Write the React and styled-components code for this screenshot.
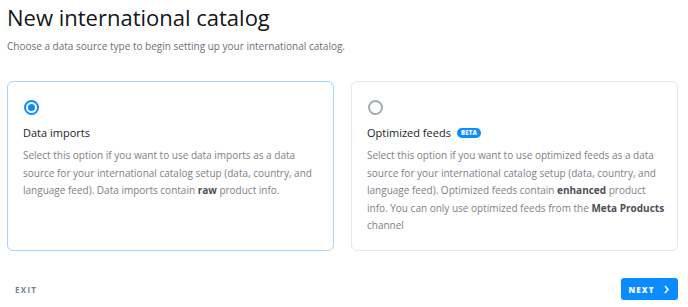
import React, { useState } from "react";
import styled, { createGlobalStyle } from "styled-components";

const GlobalStyle = createGlobalStyle`
  body {
    margin: 0;
    background: #ffffff;
    font-family: "Open Sans", "Noto Sans", sans-serif;
  }
`;

const options = [
  {
    id: "imports",
    title: "Data imports",
    body: (
      <>
        Select this option if you want to use data imports as a data source for your
        international catalog setup (data, country, and language feed). Data imports
        contain <b>raw</b> product info.
      </>
    ),
  },
  {
    id: "feeds",
    title: "Optimized feeds",
    beta: true,
    body: (
      <>
        Select this option if you want to use optimized feeds as a data source for your
        international catalog setup (data, country, and language feed). Optimized feeds
        contain <b>enhanced</b> product info. You can only use optimized feeds from the{" "}
        <b>Meta Products</b> channel
      </>
    ),
  },
];

export default function App() {
  const [selected, setSelected] = useState("imports");

  return (
    <Page>
      <GlobalStyle />
      <Title>New international catalog</Title>
      <Subtitle>Choose a data source type to begin setting up your international catalog.</Subtitle>
      <Cards>
        {options.map((opt) => (
          <Card key={opt.id} $active={selected === opt.id} onClick={() => setSelected(opt.id)}>
            <Radio $checked={selected === opt.id} />
            <CardTitle>
              {opt.title}
              {opt.beta && <Beta>BETA</Beta>}
            </CardTitle>
            <CardText>{opt.body}</CardText>
          </Card>
        ))}
      </Cards>
      <Footer>
        <ExitButton>EXIT</ExitButton>
        <NextButton>
          NEXT
          <svg width="7" height="9" viewBox="0 0 7 9">
            <path d="M2 1 L5 4.5 L2 8" fill="none" stroke="#fff" strokeWidth="1.6" />
          </svg>
        </NextButton>
      </Footer>
    </Page>
  );
}

const Page = styled.div`
  width: 688px;
  height: 307px;
  box-sizing: border-box;
  padding: 0 10px 0 7px;
  display: flex;
  flex-direction: column;
`;

const Title = styled.h1`
  margin: 1px 0 0 0;
  font-size: 22px;
  font-weight: 400;
  color: #141619;
  line-height: 32px;
`;

const Subtitle = styled.p`
  margin: 6px 0 0 0;
  font-size: 10px;
  color: #6b6f76;
  line-height: 14px;
`;

const Cards = styled.div`
  margin-top: 28px;
  display: grid;
  grid-template-columns: 1fr 1fr;
  gap: 17px;
`;

const Card = styled.div`
  height: 170px;
  box-sizing: border-box;
  border: 1px solid ${(p) => (p.$active ? "#a5d4ff" : "#e6e8eb")};
  border-radius: 6px;
  padding: 18px 10px 0 15px;
  cursor: pointer;
`;

const Radio = styled.div`
  width: 15px;
  height: 15px;
  margin-left: 1px;
  box-sizing: border-box;
  border-radius: 50%;
  border: 2px solid ${(p) => (p.$checked ? "#0a8bff" : "#a3abb5")};
  display: flex;
  align-items: center;
  justify-content: center;

  &::after {
    content: "";
    display: ${(p) => (p.$checked ? "block" : "none")};
    width: 7px;
    height: 7px;
    border-radius: 50%;
    background: #0a8bff;
  }
`;

const CardTitle = styled.div`
  margin-top: 10px;
  display: flex;
  align-items: center;
  gap: 6px;
  font-size: 11px;
  color: #1c1e21;
  line-height: 16px;
`;

const Beta = styled.span`
  background: #0a8bff;
  color: #fff;
  font-size: 6px;
  font-weight: 800;
  border-radius: 6px;
  padding: 1px 4px;
  line-height: 8px;
  letter-spacing: 0.2px;
`;

const CardText = styled.p`
  margin: 6px 0 0 0;
  font-size: 10px;
  line-height: 17.5px;
  color: #7d8087;

  b {
    color: #4b4f56;
    font-weight: 700;
  }
`;

const Footer = styled.div`
  margin-top: auto;
  margin-bottom: 7px;
  display: flex;
  justify-content: space-between;
  align-items: center;
`;

const ExitButton = styled.button`
  border: none;
  background: none;
  padding: 0 0 0 8px;
  font-family: inherit;
  font-size: 8px;
  font-weight: 700;
  letter-spacing: 1.3px;
  color: #6f7f94;
`;

const NextButton = styled.button`
  width: 57px;
  height: 22px;
  border: none;
  border-radius: 3px;
  background: #0a8bff;
  color: #fff;
  font-family: inherit;
  font-size: 8px;
  font-weight: 800;
  letter-spacing: 1.1px;
  display: flex;
  align-items: center;
  justify-content: center;
  gap: 9px;
  padding: 0;
`;
